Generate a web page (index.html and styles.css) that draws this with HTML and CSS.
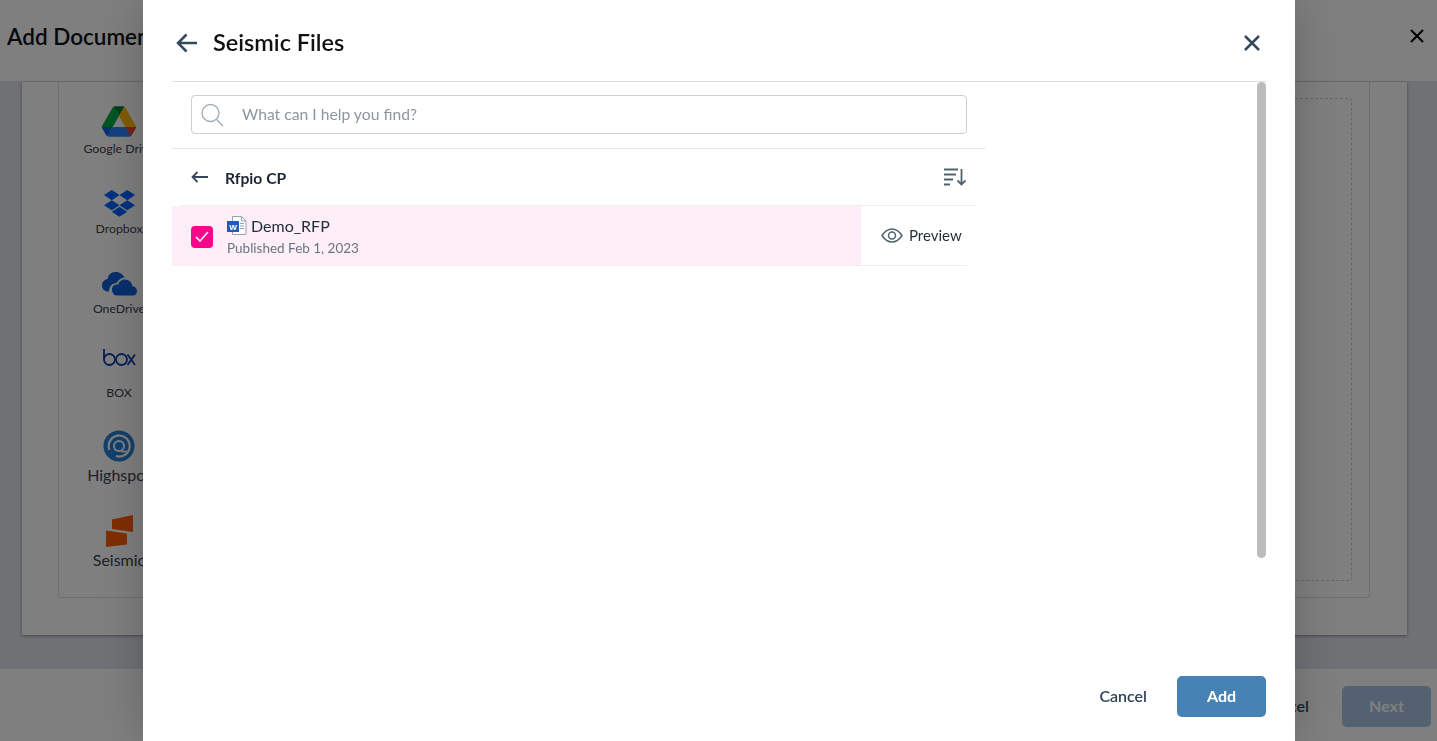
FILE: index.html
```html
<!DOCTYPE html>
<html lang="en">
<head>
  <meta charset="UTF-8" />
  <title>Add Document</title>
  <link rel="stylesheet" href="styles.css">
</head>
<body>

  <div class="page">
    <header class="page-head">
      <h1>Add Document</h1>
      <svg class="page-close" width="16" height="16" viewBox="0 0 16 16"><path d="M2 2l12 12M14 2L2 14" /></svg>
    </header>

    <main class="page-main">
      <div class="card">
        <div class="inner">
          <div class="sources">
            <div class="source">
              <svg class="ic-drive" width="34" height="31" viewBox="0 0 87.3 78">
                <path d="m6.6 66.85 3.85 6.65c.8 1.4 1.95 2.5 3.3 3.3l13.75-23.8h-27.5c0 1.55.4 3.1 1.2 4.5z" fill="#0066da"/>
                <path d="m43.65 25-13.75-23.8c-1.35.8-2.5 1.9-3.3 3.3l-25.4 44a9.06 9.06 0 0 0 -1.2 4.5h27.5z" fill="#00ac47"/>
                <path d="m73.55 76.8c1.35-.8 2.5-1.9 3.3-3.3l1.6-2.75 7.65-13.25c.8-1.4 1.2-2.95 1.2-4.5h-27.502l5.852 11.5z" fill="#ea4335"/>
                <path d="m43.65 25 13.75-23.8c-1.35-.8-2.9-1.2-4.5-1.2h-18.5c-1.6 0-3.15.45-4.5 1.2z" fill="#00832d"/>
                <path d="m59.8 53h-32.3l-13.75 23.8c1.35.8 2.9 1.2 4.5 1.2h50.8c1.6 0 3.15-.45 4.5-1.2z" fill="#2684fc"/>
                <path d="m73.4 26.5-12.7-22c-.8-1.4-1.95-2.5-3.3-3.3l-13.75 23.8 16.15 28h27.45c0-1.55-.4-3.1-1.2-4.5z" fill="#ffba00"/>
              </svg>
              <span class="source-name">Google Drive</span>
            </div>
            <div class="source">
              <svg class="ic-dropbox" width="31" height="28" viewBox="0 0 40 36"><path d="M10 0 0 6.5 10 13l10-6.5zM30 0 20 6.5 30 13l10-6.5zM0 19.500 10 26l10-6.500L10 13zM30 13l-10 6.500L30 26l10-6.500zM10 28l10 6.500L30 28l-10-6.500z" fill="#0061ff"/></svg>
              <span class="source-name">Dropbox</span>
            </div>
            <div class="source">
              <svg class="ic-onedrive" width="35" height="26" viewBox="0 0 35 26">
                <path d="M13 2C9 2 6 5 5.700 9 2.500 9.500 0 12 0 15.500 0 19 2.500 21 5 21.500L7 21.500C7 17 10 13 14.500 13 17 9 20 7.500 22.500 7.500 21 4 17.500 2 13 2z" fill="#1260d8"/>
                <path d="M23 9.500c-3.500 0-6 2-7 5-4-.5-6 2-6 5 0 3 2 6 4.500 6h16.500c2.500 0 4-2 4-4.500 0-2.500-1.800-4.500-4.500-4.700C30 12.500 27 9.500 23 9.500z" fill="#1260d8"/>
              </svg>
              <span class="source-name">OneDrive</span>
            </div>
            <div class="source">
              <svg class="ic-box" width="33" height="17" viewBox="0 0 33 17" fill="none" stroke="#0b3fa8" stroke-width="1.800">
                <path d="M1 0v10.500" />
                <circle cx="6.500" cy="10.500" r="5.500" />
                <circle cx="18.500" cy="10.500" r="5.500" />
                <path d="M24.500 5.500l7.500 10.500M32 5.500l-7.500 10.500" />
              </svg>
              <span class="source-name source-box">BOX</span>
            </div>
            <div class="source">
              <svg class="ic-highspot" width="32" height="32" viewBox="0 0 32 32">
                <circle cx="16" cy="16" r="15.500" fill="#2680d8"/>
                <path d="M6.500 20A10.500 10.500 0 1 1 13 26" fill="none" stroke="#fff" stroke-width="2.200"/>
                <circle cx="16" cy="16" r="6" fill="#fff"/>
                <circle cx="16" cy="16" r="4" fill="#2680d8"/>
                <path d="M18 21.500h6" stroke="#fff" stroke-width="1.800"/>
              </svg>
              <span class="source-name source-big">Highspot</span>
            </div>
            <div class="source">
              <svg class="ic-seismic" width="29" height="33" viewBox="0 0 29 33">
                <path d="M7 5.500 28 1v17L7 15z" fill="#ff5e00"/>
                <path d="M1 16.500 22 19.500v11L1 33z" fill="#ff5e00"/>
              </svg>
              <span class="source-name source-big">Seismic</span>
            </div>
          </div>
          <div class="dropzone"></div>
        </div>
      </div>
    </main>

    <footer class="page-foot">
      <span class="foot-cancel">Cancel</span>
      <button class="btn-next">Next</button>
    </footer>
  </div>

  <div class="backdrop"></div>

  <div class="modal">
    <div class="modal-head">
      <svg class="head-icon" width="22" height="20" viewBox="0 0 22 20"><path d="M21 10H2M10.500 1.500 2 10l8.500 8.500" /></svg>
      <h2>Seismic Files</h2>
      <svg class="head-close" width="18" height="18" viewBox="0 0 18 18"><path d="M2 2l14 14M16 2L2 16" /></svg>
    </div>

    <div class="modal-body">
      <div class="file-panel">
        <div class="search-wrap">
          <div class="search">
            <svg width="23" height="24" viewBox="0 0 23 24" fill="none" stroke="#9fb0bd" stroke-width="1.400"><circle cx="9.500" cy="10" r="8.500"/><path d="M15.500 16.500 22 23"/></svg>
            <span>What can I help you find?</span>
          </div>
        </div>

        <div class="crumb">
          <svg class="crumb-back" width="17" height="12" viewBox="0 0 17 12"><path d="M17 6H1.500M6.500 1 1.500 6l5 5" /></svg>
          <span class="crumb-name">Rfpio CP</span>
          <svg class="crumb-sort" width="22" height="18" viewBox="0 0 22 18"><path d="M0 1.500h14M0 6.500h12M0 11.500h9M0 16.500h6M17.500 1v15.500M13.500 12.500l4 4 4-4" /></svg>
        </div>

        <div class="file-row">
          <div class="file-main">
            <span class="check">
              <svg width="14" height="11" viewBox="0 0 14 11"><path d="M1 6l4 4 8-9" /></svg>
            </span>
            <div class="file-text">
              <div class="file-title">
                <svg class="word" width="20" height="19" viewBox="0 0 20 19">
                  <path d="M5.500.5h9l4.500 4.500v13.500H5.500z" fill="#fff" stroke="#9aa0a8"/>
                  <path d="M14.500.5V5H19" fill="none" stroke="#9aa0a8"/>
                  <path d="M13 7.500h4M13 10h4M13 12.500h4" stroke="#7fa4d8"/>
                  <rect x="0" y="5" width="12" height="11" fill="#1d5bbf"/>
                  <text x="6" y="14" text-anchor="middle">W</text>
                </svg>
                <span>Demo_RFP</span>
              </div>
              <div class="file-date">Published Feb 1, 2023</div>
            </div>
          </div>
          <div class="file-preview">
            <svg width="22" height="15" viewBox="0 0 22 15" fill="none" stroke="#4f6270" stroke-width="1.500"><path d="M1 7.500C4 3 7 1 11 1s7 2 10 6.500C18 12 15 14 11 14S4 12 1 7.500z"/><circle cx="11" cy="7.500" r="3.500"/></svg>
            <span>Preview</span>
          </div>
        </div>
      </div>
      <div class="scroll-thumb"></div>
    </div>

    <div class="modal-foot">
      <span class="link-cancel">Cancel</span>
      <button class="btn-add">Add</button>
    </div>
  </div>

</body>
</html>
```

FILE: styles.css
```css
* { margin: 0; padding: 0; box-sizing: border-box; }

body {
  font-family: 'Lato', sans-serif;
  height: 741px;
  overflow: hidden;
  color: #111;
}

/* page behind the dialog */
.page {
  display: flex;
  flex-direction: column;
  height: 741px;
  background: #e0e3e9;
}

.page-head {
  height: 82px;
  flex: none;
  display: flex;
  align-items: center;
  justify-content: space-between;
  padding: 0 12px 9px 7px;
  background: #fff;
  border-bottom: 1px solid #ddd;
}

.page-head h1 {
  font-size: 22.5px;
  font-weight: 600;
  white-space: nowrap;
}

.page-close path {
  stroke: #000;
  stroke-width: 2;
  fill: none;
}

.page-main {
  flex: 1;
  padding: 0 30px 34px 22px;
  display: flex;
}

.card {
  flex: 1;
  background: #fff;
  padding: 0 37px 37px 36px;
  display: flex;
  box-shadow: 0 1px 3px rgba(0, 0, 0, 0.4);
}

.inner {
  flex: 1;
  border: 1px solid #ddd;
  border-top: none;
  border-radius: 0 0 3px 3px;
  padding: 16px 17px 16px 0;
  display: flex;
  justify-content: space-between;
}

.sources {
  width: 120px;
  display: flex;
  flex-direction: column;
  align-items: center;
  padding-top: 8px;
}

.source {
  display: flex;
  flex-direction: column;
  align-items: center;
}

.source-name {
  font-size: 12.3px;
  color: #3c4250;
  white-space: nowrap;
}

.source-big {
  font-size: 16px;
  line-height: 20px;
}

.source-box { margin-top: 19px; }

.ic-drive { margin-bottom: 4px; }
.ic-dropbox { margin-top: 34px; margin-bottom: 3px; }
.ic-onedrive { margin-top: 34px; margin-bottom: 5px; }
.ic-box { margin-top: 33px; }
.ic-highspot { margin-top: 30px; margin-bottom: 3px; }
.ic-seismic { margin-top: 29px; margin-bottom: 3px; }

.dropzone {
  width: 400px;
  border: 1px dashed #ccc;
  border-radius: 3px;
}

.page-foot {
  height: 72px;
  flex: none;
  background: #fff;
  display: flex;
  justify-content: flex-end;
  align-items: center;
  gap: 33px;
  padding: 0 6px 0 0;
}

.foot-cancel {
  font-size: 16px;
  font-weight: 600;
  color: #2f4358;
}

.btn-next {
  width: 89px;
  height: 41px;
  margin-top: 3px;
  padding-bottom: 2px;
  border: none;
  border-radius: 5px;
  background: #a6c2e0;
  color: #fff;
  font-family: inherit;
  font-size: 16px;
  font-weight: 700;
}

.backdrop {
  position: fixed;
  inset: 0;
  background: rgba(0, 0, 0, 0.5);
}

/* dialog */
.modal {
  position: fixed;
  top: 0;
  left: 143px;
  width: 1152px;
  height: 741px;
  padding: 0 29px;
  background: #fff;
  display: flex;
  flex-direction: column;
  box-shadow: 0 0 45px rgba(0, 0, 0, 0.22);
}

.modal-head {
  height: 82px;
  flex: none;
  display: flex;
  align-items: center;
  padding: 4px 5px 0 4px;
  border-bottom: 1px solid #dedede;
}

.head-icon path, .head-close path {
  stroke: #34495e;
  stroke-width: 2.500;
  fill: none;
}

.modal-head h2 {
  flex: 1;
  margin-left: 15px;
  margin-bottom: 1px;
  font-size: 23.5px;
  font-weight: 600;
  color: #111;
}

.modal-body {
  flex: 1;
  display: flex;
  justify-content: space-between;
  min-height: 0;
}

.file-panel { width: 814px; }

.search-wrap {
  height: 67px;
  padding: 13px 19px 0;
  border-bottom: 1px solid #e8e8e8;
}

.search {
  height: 39px;
  padding: 0 0 2px 9px;
  border: 1px solid #ccd0d6;
  border-radius: 4px;
  display: flex;
  align-items: center;
  gap: 18px;
  font-size: 15.7px;
  color: #8c96a0;
}

.search svg { margin-top: 2px; }

.crumb {
  width: 797px;
  height: 57px;
  margin-left: 8px;
  display: flex;
  align-items: center;
  padding: 0 11px 0 11px;
  border-bottom: 1px solid #eee;
}

.crumb-back path, .crumb-sort path {
  stroke: #34495e;
  fill: none;
}

.crumb-back path { stroke-width: 1.800; }
.crumb-sort path { stroke: #4f6270; stroke-width: 1.800; }

.crumb-name {
  flex: 1;
  margin-left: 17px;
  padding-top: 2px;
  font-size: 15.700px;
  font-weight: 700;
  color: #1c2733;
}

.file-row {
  position: relative;
  width: 795px;
  height: 60px;
  display: flex;
}

.file-row::after {
  content: "";
  position: absolute;
  left: 19px;
  right: 0;
  bottom: 0;
  height: 1px;
  background: #eee;
}

.file-main {
  width: 689px;
  background: #fdeef8;
  display: flex;
  align-items: center;
  padding-left: 19px;
  gap: 14px;
}

.check {
  width: 22px;
  height: 22px;
  margin-top: 1px;
  border-radius: 4px;
  background: #f8078b;
  display: flex;
  align-items: center;
  justify-content: center;
}

.check path {
  stroke: #fff;
  stroke-width: 1.500;
  fill: none;
}

.file-title {
  display: flex;
  align-items: center;
  gap: 4px;
  margin-top: -1px;
  font-size: 16px;
  color: #1f2d3d;
}

.word text {
  font-family: 'Liberation Sans', sans-serif;
  font-size: 8px;
  font-weight: 700;
  fill: #fff;
}

.file-date {
  margin-top: 5px;
  font-size: 13.500px;
  color: #69747f;
}

.file-preview {
  flex: 1;
  display: flex;
  align-items: center;
  gap: 6px;
  padding-left: 20px;
  padding-bottom: 2px;
  font-size: 15px;
  color: #1f2d3d;
}

.scroll-thumb {
  width: 9px;
  height: 476px;
  border-radius: 5px;
  background: #bcbcbc;
}

.modal-foot {
  height: 65px;
  flex: none;
  display: flex;
  justify-content: flex-end;
  align-items: flex-start;
  gap: 30px;
}

.link-cancel {
  height: 41px;
  line-height: 39px;
  font-size: 16px;
  font-weight: 600;
  color: #2f4358;
}

.btn-add {
  width: 89px;
  height: 41px;
  padding-bottom: 2px;
  border: none;
  border-radius: 5px;
  background: #4682b4;
  color: #fff;
  font-family: inherit;
  font-size: 16px;
  font-weight: 700;
}
```
